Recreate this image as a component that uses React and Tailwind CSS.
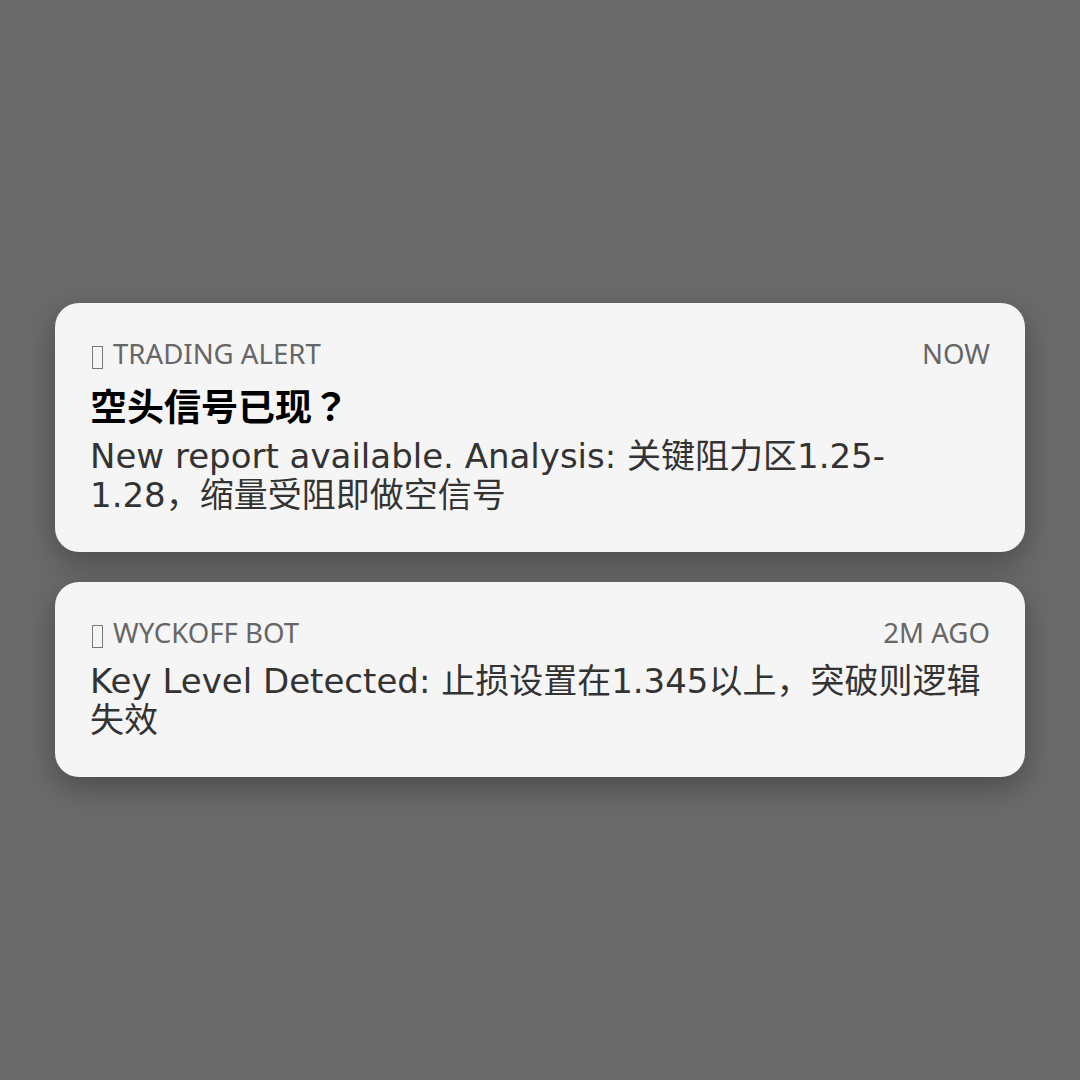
import React from "react";

const notes = [
  {
    app: "TRADING ALERT",
    time: "NOW",
    title: "空头信号已现？",
    body: "New report available. Analysis: 关键阻力区1.25-1.28，缩量受阻即做空信号",
  },
  {
    app: "WYCKOFF BOT",
    time: "2M AGO",
    body: "Key Level Detected: 止损设置在1.345以上，突破则逻辑失效",
  },
];

// missing-glyph box that the app icon shows as
const Tofu = () => (
  <span className="ml-[2px] mr-[10px] inline-block h-[23px] w-[11px] border border-[#777] align-[-5px]" />
);

const Notification = ({ app, time, title, body }) => (
  <div className="w-full rounded-[24px] bg-[#f5f5f5] px-[35px] pt-[34px] pb-[37px] shadow-[0_10px_30px_rgba(0,0,0,0.3)]">
    {/* Header */}
    <div className="flex items-center justify-between text-[27.6px] leading-[32px] text-[#666] font-['Noto_Sans','Noto_Sans_CJK_SC',sans-serif]">
      <span>
        <Tofu />
        {app}
      </span>
      <span>{time}</span>
    </div>

    {title && (
      <div className="mt-[16px] text-[37px] leading-[40px] font-bold text-black font-['Noto_Sans_CJK_JP',sans-serif]">
        {title}
      </div>
    )}

    <p
      className={`${title ? "mt-[12px]" : "mt-[14px]"} text-[34px] leading-[39px] text-[#333] font-['DejaVu_Sans','Noto_Sans_CJK_SC',sans-serif]`}
    >
      {body}
    </p>
  </div>
);

export default function App() {
  return (
    <div className="flex h-[1080px] w-[1080px] flex-col items-center justify-center gap-[30px] bg-[#6a6a6a] px-[55px]">
      {notes.map((n) => (
        <Notification key={n.app} {...n} />
      ))}
    </div>
  );
}
